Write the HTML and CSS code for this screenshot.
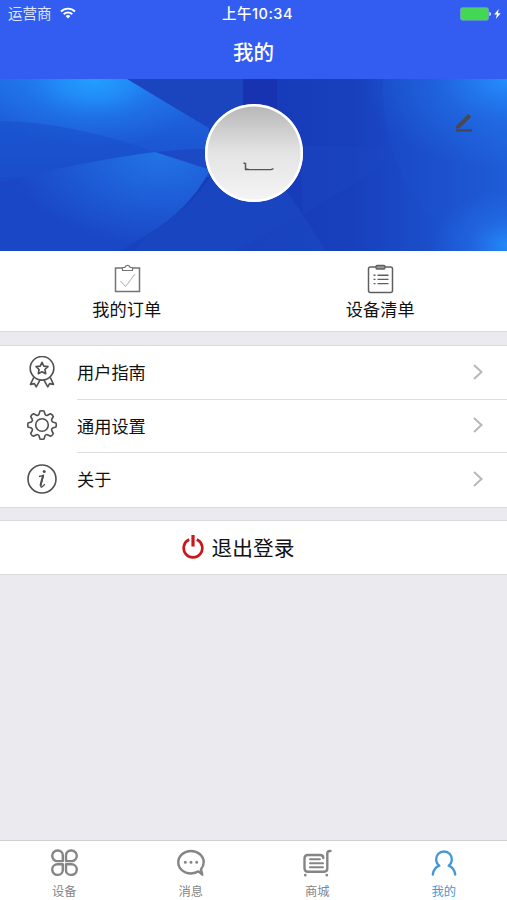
FILE: index.html
```html
<!DOCTYPE html>
<html lang="zh-CN">
<head>
    <meta charset="UTF-8">
    <meta name="viewport" content="width=device-width, initial-scale=1.0">
    <title>我的</title>
    <link rel="stylesheet" href="styles.css">
</head>
<body>
    <header class="header">
        <div class="status-bar">
            <div class="carrier">
                <span>运营商</span>
                <svg class="wifi" width="16" height="12" viewBox="0 0 16 12" fill="none" stroke="#fff" stroke-width="1.9">
                    <path d="M1 4.5a10 10 0 0 1 14 0M3.7 7.2a6.2 6.2 0 0 1 8.6 0"/>
                    <path d="M8 11.5L5.6 9.1a3.4 3.4 0 0 1 4.8 0z" fill="#fff" stroke="none"/>
                </svg>
            </div>
            <span class="time">上午10:34</span>
            <svg class="battery" width="42" height="14" viewBox="0 0 42 14">
                <rect x=".5" y=".7" width="28" height="12.5" rx="2" fill="#43d854" stroke="#7fa6c8" stroke-width=".7"/>
                <path d="M29.3 5q1.7.2 1.7 2t-1.7 2z" fill="#d7e3ff"/>
                <path d="M38.8 2L34.2 7.5h2.7L35.8 12l4.9-5.7h-2.8z" fill="#fff"/>
            </svg>
        </div>
        <h1>我的</h1>
    </header>

    <section class="banner">
        <svg class="banner-bg" viewBox="0 0 507 172" preserveAspectRatio="none">
            <defs>
                <linearGradient id="base" x1="0" x2="1">
                    <stop offset="0" stop-color="#1a48c8"/>
                    <stop offset=".5" stop-color="#163ab8"/>
                    <stop offset=".7" stop-color="#1840bd"/>
                    <stop offset="1" stop-color="#1f5dd8"/>
                </linearGradient>
                <linearGradient id="left" x1="0" y1="0" x2="0" y2="1">
                    <stop offset="0" stop-color="#1f6ae4"/>
                    <stop offset="1" stop-color="#1b4ecb"/>
                </linearGradient>
                <radialGradient id="glow" gradientUnits="userSpaceOnUse" cx="0" cy="0" r="1" gradientTransform="translate(94 0) scale(120 68)">
                    <stop offset="0" stop-color="#22a0ff"/>
                    <stop offset=".3" stop-color="#2294fc" stop-opacity=".8"/>
                    <stop offset=".6" stop-color="#2288f5" stop-opacity=".35"/>
                    <stop offset="1" stop-color="#2288f5" stop-opacity="0"/>
                </radialGradient>
                <radialGradient id="fan" gradientUnits="userSpaceOnUse" cx="0" cy="0" r="1" gradientTransform="translate(160 76) scale(150 90)">
                    <stop offset="0" stop-color="#2173e5"/>
                    <stop offset=".5" stop-color="#1e5dd7"/>
                    <stop offset="1" stop-color="#1a47c5"/>
                </radialGradient>
                <radialGradient id="cornerTop" gradientUnits="userSpaceOnUse" cx="0" cy="0" r="1" gradientTransform="translate(507 0) scale(145 90)">
                    <stop offset="0" stop-color="#258fff"/>
                    <stop offset=".5" stop-color="#2377ee" stop-opacity=".45"/>
                    <stop offset="1" stop-color="#2377ee" stop-opacity="0"/>
                </radialGradient>
                <radialGradient id="cornerBottom" gradientUnits="userSpaceOnUse" cx="0" cy="0" r="1" gradientTransform="translate(507 166) scale(75 55)">
                    <stop offset="0" stop-color="#248af8"/>
                    <stop offset=".5" stop-color="#2377ee" stop-opacity=".4"/>
                    <stop offset="1" stop-color="#2377ee" stop-opacity="0"/>
                </radialGradient>
                <linearGradient id="side" x1="0" x2="1">
                    <stop offset="0" stop-color="#1d54d0" stop-opacity=".2"/>
                    <stop offset="1" stop-color="#1d54d0" stop-opacity=".1"/>
                </linearGradient>
            </defs>
            <rect width="507" height="172" fill="url(#base)"/>
            <path d="M127 0H243V70L209 49z" fill="#1b44bf"/>
            <path d="M243 0H277V50H243z" fill="#1733b1"/>
            <path d="M0 0H127Q165 23 209 49V98H0z" fill="url(#left)"/>
            <path d="M0 0H127Q165 23 209 49V90H0z" fill="url(#glow)"/>
            <path d="M0 42Q70 43 155 73L205 88L150 100L0 105z" fill="#1a4fcb" opacity=".55"/>
            <path d="M155 73Q180 70 210 70V90z" fill="#1b4ac4"/>
            <path d="M0 103Q85 82 155 73L210 91Q190 130 147 156L120 172H0z" fill="url(#fan)"/>
            <path d="M210 98Q190 130 147 156L135 172H232L303 136L285 110z" fill="#1946c0"/>
            <path d="M303 136L326 172H230z" fill="#1d4fc7" opacity=".4"/>
            <path d="M303 136L395 80L380 68L300 67z" fill="#1c48c2" opacity=".35"/>
            <path d="M383 0H507V172H470Q380 110 383 0z" fill="url(#side)"/>
            <rect width="507" height="172" fill="url(#cornerTop)"/>
            <rect width="507" height="172" fill="url(#cornerBottom)"/>
        </svg>
        <div class="avatar">
            <svg width="92" height="92" viewBox="0 0 92 92" fill="none" stroke="#555">
                <path d="M35.5 56l2 .5v5.7h3" stroke-width="1.5"/>
                <path d="M37 62.7L63 62.7L65.5 61.7" stroke-width="1.3"/>
            </svg>
        </div>
        <svg class="edit" width="18" height="20" viewBox="0 0 18 20" fill="#474a56">
            <path d="M1 13L13.2.9l3.1 2.8L4.4 15.6H1zM1 16h16v2.7H1z"/>
        </svg>
    </section>

    <nav class="shortcuts">
        <a class="shortcut">
            <svg width="28" height="30" viewBox="0 0 28 30" fill="none" stroke="#747474">
                <path d="M9 4H2.5v23.5h24V4H19" stroke-width="1.5"/>
                <path d="M9.5 3.5h2.3a2.8 2.8 0 0 1 5.4 0h2.3v3h-10z" stroke-width="1.2"/>
                <path d="M7.5 17l5 5.5L22 10" stroke="#aaa"/>
            </svg>
            <span>我的订单</span>
        </a>
        <a class="shortcut">
            <svg width="28" height="30" viewBox="0 0 28 30" fill="none" stroke="#5f5f5f">
                <rect x="2.5" y="3" width="24" height="25.5" rx="2" stroke-width="1.5"/>
                <rect x="10" y="1.5" width="9" height="3.5" rx="1" fill="#999" stroke-width="1.3"/>
                <path d="M11.5 11.2h11M11.5 15.4h11M11.5 19.6h11M7.5 11.2h2M7.5 15.4h2M7.5 19.6h2" stroke-width="1.4"/>
            </svg>
            <span>设备清单</span>
        </a>
    </nav>

    <ul class="menu">
        <li class="menu-item">
            <svg class="menu-icon" viewBox="-16 -16 32 32">
                <circle cy="-3.7" r="11.8"/>
                <path d="M0-9.7L1.8-5.9 6-5.4 2.9-2.5 3.7 1.7 0-.3-3.7 1.7-2.9-2.5-6-5.4-1.8-5.9z"/>
                <path d="M-8.3 5.5L-11.5 12.4-7.6 11.6-5.8 14.8-2 8.1M8.3 5.5L11.5 12.4 7.6 11.6 5.8 14.8 2 8.1"/>
            </svg>
            <div class="menu-label">
                <span>用户指南</span>
                <svg class="chevron" viewBox="0 0 10 16"><path d="M1 1l7.5 7L1 15"/></svg>
            </div>
        </li>
        <li class="menu-item">
            <svg class="menu-icon" viewBox="-16 -16 32 32">
                <circle r="6.3"/>
                <path d="M-2-14Q0-14.6 2-14L3-10.7Q4.2-9 5.5-9.7L8.5-11.3Q10.5-10.5 11.3-8.5L9.7-5.5Q9-4.2 10.7-3L14-2Q14.6 0 14 2L10.7 3Q9 4.2 9.7 5.5L11.3 8.5Q10.5 10.5 8.5 11.3L5.5 9.7Q4.2 9 3 10.7L2 14Q0 14.6-2 14L-3 10.7Q-4.2 9-5.5 9.7L-8.5 11.3Q-10.5 10.5-11.3 8.5L-9.7 5.5Q-9 4.2-10.7 3L-14 2Q-14.6 0-14-2L-10.7-3Q-9-4.2-9.7-5.5L-11.3-8.5Q-10.5-10.5-8.5-11.3L-5.5-9.7Q-4.2-9-3-10.7z"/>
            </svg>
            <div class="menu-label">
                <span>通用设置</span>
                <svg class="chevron" viewBox="0 0 10 16"><path d="M1 1l7.5 7L1 15"/></svg>
            </div>
        </li>
        <li class="menu-item">
            <svg class="menu-icon" viewBox="-16 -16 32 32">
                <circle r="14"/>
                <circle cx="2.2" cy="-7.6" r="1.5" fill="#505050" stroke="none"/>
                <path d="M-3-2.5Q.3-3 1.6-3.9L-1.2 6Q-1.6 8.6.1 7.8 1.5 7 2.8 5.2" stroke-width="1.3"/>
                <path d="M.9-3L-1.6 6.8" stroke-width="2"/>
            </svg>
            <div class="menu-label">
                <span>关于</span>
                <svg class="chevron" viewBox="0 0 10 16"><path d="M1 1l7.5 7L1 15"/></svg>
            </div>
        </li>
    </ul>

    <button class="logout">
        <svg width="22" height="26" viewBox="0 0 22 26" fill="none" stroke="#cc1719" stroke-width="2.7">
            <path d="M7.2 5.6a9.3 9.3 0 1 0 7.6 0"/>
            <path d="M11 1v11.5" stroke-width="3.2"/>
        </svg>
        <span>退出登录</span>
    </button>

    <footer class="tab-bar">
        <a class="tab">
            <svg width="30" height="28" viewBox="0 0 30 28">
                <path d="M8.5 1.5h.5a4.8 4.8 0 0 1 4.800 4.800v5.800H8.500a5.300 5.300 0 0 1 0-10.600zM22.500 1.500h-.8a4.700 4.700 0 0 0-4.700 4.700v5.900h5.500a5.300 5.300 0 0 0 0-10.600zM8.500 15.300h5.300v5.800A4.800 4.800 0 0 1 9 25.900h-.5a5.300 5.300 0 0 1 0-10.600zM22.500 15.300H17v5.900a4.700 4.700 0 0 0 4.700 4.700h.8a5.300 5.300 0 0 0 0-10.600z"/>
            </svg>
            <span>设备</span>
        </a>
        <a class="tab">
            <svg width="30" height="28" viewBox="0 0 30 28">
                <path d="M22.6 22.4a15 11.8 0 0 1-7.6 2.1C7.5 24.5 2.3 19.5 2.3 13.2S8 2 15 2s12.700 4.900 12.700 11.200c0 3-1.200 5.300-2.700 7.100l1.300 5.400z"/>
                <path d="M9.3 13.2h.01M15 13.2h.01M20.7 13.2h.01" stroke-width="3"/>
            </svg>
            <span>消息</span>
        </a>
        <a class="tab">
            <svg width="30" height="28" viewBox="0 0 30 28">
                <path d="M28.5 2h-.8q-2.400 0-2.400 2.700v14.800q0 3.200-3.200 3.200H6q-3.500 0-3.500-3.500V9.500Q2.500 6 6 6h12q3.300 0 3.300 3"/>
                <path d="M8 10.300h10M8 14.300h13M8 18.200h13" stroke-width="1.900"/>
                <circle cx="3.300" cy="26.200" r=".8" stroke-width="1.200"/>
                <circle cx="24.800" cy="26.200" r=".8" stroke-width="1.200"/>
            </svg>
            <span>商城</span>
        </a>
        <a class="tab active">
            <svg width="30" height="28" viewBox="0 0 30 28">
                <path d="M3.800 25.500Q4.700 19 10.300 16.700A7.900 7.900 0 1 1 19.700 16.700Q25.300 19 26.200 25.500"/>
            </svg>
            <span>我的</span>
        </a>
    </footer>
</body>
</html>
```
FILE: styles.css
```css
* {
    box-sizing: border-box;
}

body {
    margin: 0;
    height: 900px;
    display: flex;
    flex-direction: column;
    background-color: #eaeaef;
    color: #111;
    font-family: "Liberation Sans", "Noto Sans CJK SC", sans-serif;
    overflow: hidden;
}

svg {
    display: block;
    flex-shrink: 0;
}

.header {
    height: 79px;
    background-color: #325df0;
    color: white;
}

.status-bar {
    height: 27px;
    display: grid;
    grid-template-columns: 1fr auto 1fr;
    align-items: center;
    padding: 0 5px 0 8px;
    font-size: 14.5px;
    line-height: 25px;
}

.carrier {
    display: flex;
    align-items: center;
    gap: 8px;
    color: #dfe7ff;
}

.carrier span {
    padding-top: 2px;
}

.time {
    font-family: Inter, "Noto Sans CJK SC", sans-serif;
    font-size: 14.5px;
    font-weight: 500;
    letter-spacing: 0.5px;
    padding-left: 5px;
}

.wifi {
    margin-top: -2px;
}

.battery {
    justify-self: end;
}

.header h1 {
    margin: 0;
    text-align: center;
    font-size: 20.5px;
    font-weight: 500;
    line-height: 52px;
}

.banner {
    position: relative;
    height: 172px;
    display: flex;
    justify-content: center;
    align-items: flex-start;
    padding-top: 25px;
}

.banner-bg {
    position: absolute;
    top: 0;
    left: 0;
    width: 100%;
    height: 100%;
}

.avatar {
    position: relative;
    width: 98px;
    height: 98px;
    padding: 3px;
    border-radius: 50%;
    background: linear-gradient(to bottom, #b5b5b5, #e4e4e4 50%, #f5f5f5);
    box-shadow: inset 0 0 0 2.5px white;
}

.edit {
    position: absolute;
    top: 34px;
    right: 34px;
}

.shortcuts {
    height: 81px;
    display: grid;
    grid-template-columns: 1fr 1fr;
    background-color: white;
    border-bottom: 1px solid #d8d8dd;
}

.shortcut {
    display: flex;
    flex-direction: column;
    align-items: center;
    padding-top: 13px;
    font-size: 17.2px;
    line-height: 33px;
}

.menu {
    list-style: none;
    margin: 13px 0 0;
    padding: 0;
    background-color: white;
    border-top: 1px solid #d8d8dd;
    border-bottom: 1px solid #d8d8dd;
}

.menu-item {
    display: flex;
    align-items: center;
    gap: 19px;
    height: 53.5px;
    padding-left: 26px;
}

.menu-icon {
    width: 32px;
    height: 32px;
    margin-top: -2px;
    fill: none;
    stroke: #505050;
    stroke-width: 1.6;
    stroke-linejoin: round;
}

.menu-label {
    flex: 1;
    height: 100%;
    display: flex;
    justify-content: space-between;
    align-items: center;
    padding: 0 24px 1px 0;
    border-bottom: 1px solid #dedee1;
    font-size: 17.2px;
}

.menu-item:last-child .menu-label {
    border-bottom: none;
    padding-bottom: 2px;
}

.chevron {
    width: 10px;
    height: 16px;
    fill: none;
    stroke: #b8b8bb;
    stroke-width: 2;
}

.logout {
    display: flex;
    justify-content: center;
    align-items: center;
    gap: 8px;
    height: 55px;
    margin-top: 12px;
    padding: 0 31px 1px 0;
    border: 1px solid #d8d8dd;
    border-width: 1px 0;
    background-color: white;
    color: #111;
    font-family: inherit;
    font-size: 20.7px;
}

.tab-bar {
    display: grid;
    grid-template-columns: repeat(4, 1fr);
    height: 60px;
    margin-top: auto;
    padding-left: 1px;
    background-color: white;
    border-top: 1px solid #cfcfd3;
}

.tab {
    display: flex;
    flex-direction: column;
    align-items: center;
    padding-top: 8px;
    color: #858585;
    font-size: 12.3px;
    line-height: 30px;
}

.tab svg {
    fill: none;
    stroke: currentColor;
    stroke-width: 2.4;
    stroke-linecap: round;
    stroke-linejoin: round;
}

.tab.active {
    color: #4499d5;
}
```
